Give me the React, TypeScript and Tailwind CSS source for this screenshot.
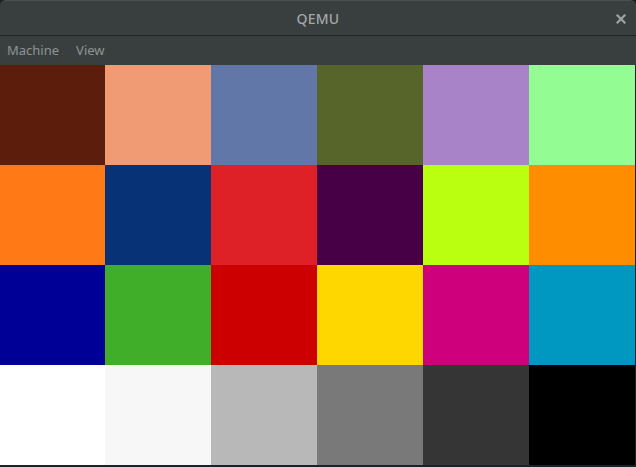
import React from "react";

const rows: string[][] = [
  ["#5c1d0d", "#f19b74", "#6077a8", "#58652a", "#a983c8", "#93fd94"],
  ["#ff7a17", "#073276", "#de2027", "#470046", "#baff0f", "#ff8d00"],
  ["#000096", "#40ae28", "#cc0000", "#ffd700", "#cf007c", "#0098c0"],
  ["#ffffff", "#f7f7f7", "#b8b8b8", "#797979", "#353535", "#000000"],
];

const widths = [105, 106, 106, 106, 106, 106];

export default function App() {
  return (
    <div className="w-[636px] h-[467px] bg-[#1c2224] overflow-hidden flex flex-col" style={{ fontFamily: '"Noto Sans", "Open Sans", sans-serif' }}>
      <div className="h-[36px] bg-[#393f3f] rounded-t-[6px] border-t border-[#4a5050] border-b border-b-[#1f2424] flex items-center justify-center relative shrink-0">
        <span className="text-[14px] text-[#a3a7a7] font-medium tracking-[0.2px]">QEMU</span>
        <svg className="absolute left-[616px] top-[13px]" width="10" height="10" viewBox="0 0 10 10">
          <path d="M1.5 1.5 L8.5 8.5 M8.5 1.5 L1.5 8.5" stroke="#a0a4a4" strokeWidth="2.2" strokeLinecap="square" />
        </svg>
      </div>
      <div className="h-[29px] bg-[#393f3f] flex items-center gap-[17px] pl-[7px] text-[13px] text-[#8f9494] shrink-0">
        <span>Machine</span>
        <span>View</span>
      </div>
      <div className="flex flex-col w-[635px]">
        {rows.map((r, i) => (
          <div key={i} className="flex h-[100px]">
            {r.map((c, j) => (
              <div key={j} className="h-full" style={{ background: c, width: widths[j] }} />
            ))}
          </div>
        ))}
      </div>
    </div>
  );
}
